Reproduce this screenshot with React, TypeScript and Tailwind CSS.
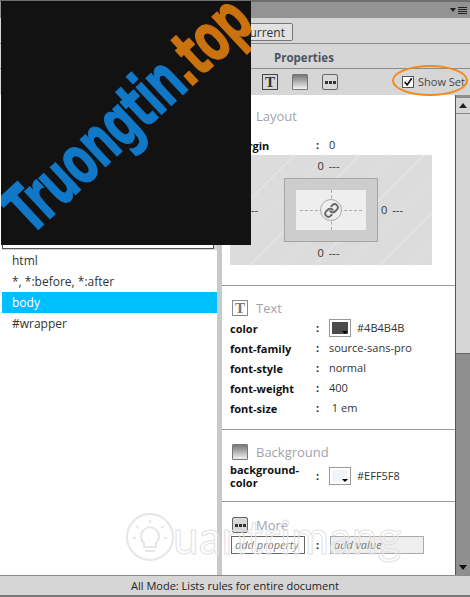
import { Link as LinkIcon } from 'lucide-react';

const textRows = [
  { label: 'font-family', value: 'source-sans-pro' },
  { label: 'font-style', value: 'normal' },
  { label: 'font-weight', value: '400' },
  { label: 'font-size', value: ' 1 em' },
];

function TextIcon({ dim }: { dim?: boolean }) {
  return (
    <div className={`w-[16px] h-[16px] border flex items-center justify-center font-['Liberation_Serif',serif] font-bold text-[15px] leading-none ${dim ? 'border-[#8a8a8a] text-[#777]' : 'border-[#444] text-[#333]'}`}>
      T
    </div>
  );
}

function BackgroundIcon() {
  return <div className="w-[16px] h-[16px] border border-[#777] rounded-[1px] bg-gradient-to-b from-[#777] to-[#f2f2f2]" />;
}

function MoreIcon() {
  return (
    <div className="w-[16px] h-[16px] border border-[#666] rounded-[2px] bg-[#d8d8d8] flex items-center justify-center gap-[1px]">
      <span className="w-[3px] h-[3px] bg-[#333]" />
      <span className="w-[3px] h-[3px] bg-[#333]" />
      <span className="w-[3px] h-[3px] bg-[#333]" />
    </div>
  );
}

function Swatch({ color }: { color: string }) {
  return (
    <div className="relative w-[22px] h-[18px] border border-[#999] bg-white p-[2px]">
      <div className={`w-full h-full ${color}`} />
      <span className="absolute right-[2px] bottom-[2px] border-x-[3px] border-t-[3px] border-x-transparent border-t-black" />
    </div>
  );
}

function Label({ children }: { children: React.ReactNode }) {
  return <div className="w-[86px] font-bold text-[#111] leading-[13px]">{children}</div>;
}

function Colon() {
  return <div className="w-[13px] font-bold text-[#222]">:</div>;
}

export default function App() {
  return (
    <div className="relative w-[470px] h-[597px] overflow-hidden flex flex-col bg-[#d6d6d6] font-['Open_Sans',sans-serif] text-[11px] text-[#333]">
      {/* Barre du haut */}
      <div className="h-[18px] bg-[#939393] border-t-2 border-[#6e6e6e] flex items-center justify-end pr-[3px] gap-[2px]">
        <span className="border-x-[3px] border-t-[4px] border-x-transparent border-t-[#222]" />
        <div className="flex flex-col gap-[1px] w-[9px]">
          <span className="h-[1px] bg-[#222]" />
          <span className="h-[1px] bg-[#222]" />
          <span className="h-[1px] bg-[#222]" />
          <span className="h-[1px] bg-[#222]" />
        </div>
      </div>

      <div className="h-[26px] border-b border-[#8c8c8c] flex items-start pt-[5px] pl-[230px]">
        <div className="w-[63px] h-[18px] border border-[#777] rounded-[2px] bg-[#e2e2e2] text-[12px] leading-[17px] text-right pr-[7px]">Current</div>
      </div>

      <div className="h-[25px] border-b border-[#8c8c8c] flex items-center pt-[3px] pl-[274px] font-bold text-[11.5px] text-[#4b5563]">
        Properties
      </div>

      <div className="h-[26px] flex items-center pl-[262px]">
        <div className="flex gap-[14px]">
          <TextIcon />
          <BackgroundIcon />
          <MoreIcon />
        </div>
        <div className="ml-[64px] flex items-center gap-[4px]">
          <div className="w-[12px] h-[12px] border border-[#555] bg-white flex items-center justify-center">
            <svg viewBox="0 0 12 12" className="w-[12px] h-[12px]">
              <path d="M2 6 L5 9.5 L10.5 1.5" fill="none" stroke="#111" strokeWidth="2" />
            </svg>
          </div>
          <span className="text-[11px] text-[#444]">Show Set</span>
        </div>
      </div>

      <div className="flex-1 flex min-h-0">
        {/* Liste des règles */}
        <div className="w-[217px] flex flex-col pl-[2px] bg-white">
          <div className="h-[155px] bg-[#d6d6d6] flex flex-col justify-end pb-[1px]">
            <div className="h-[18px] mr-[3px] border border-[#555] bg-white" />
          </div>
          <div className="text-[12px] text-[#333]">
            <div className="h-[21px] pl-[10px] pt-[1px] flex items-center">html</div>
            <div className="h-[21px] pl-[10px] pt-[1px] flex items-center">*, *:before, *:after</div>
            <div className="h-[21px] pl-[10px] pt-[1px] flex items-center bg-[#00bfff] text-white">body</div>
            <div className="h-[21px] pl-[10px] pt-[1px] flex items-center">#wrapper</div>
          </div>
        </div>

        <div className="w-[5px] bg-[#c9c9c9]" />

        {/* Panneau des propriétés */}
        <div className="w-[233px] bg-white flex flex-col">
          <section className="h-[191px] border-b border-[#999] pl-[8px]">
            <div className="h-[40px] pl-[26px] pt-[12px] text-[13px] leading-[18px] text-[#a3a3ad]">Layout</div>
            <div className="h-[20px] flex items-center">
              <Label>margin</Label>
              <Colon />
              <span>0</span>
            </div>
            <div className="w-[202px] h-[110px] grid grid-cols-[54px_94px_54px] grid-rows-[23px_64px_23px] bg-[#dcdcdc] bg-[repeating-linear-gradient(135deg,#dcdcdc_0px,#dcdcdc_22px,#e4e4e4_22px,#e4e4e4_23px)]">
              <div />
              <div className="flex items-center justify-center gap-[5px] pr-[5px]"><span>0</span><span>---</span></div>
              <div />
              <div className="flex items-center justify-end pr-[26px]"><span>---</span></div>
              <div className="border border-[#a5a5a5] bg-[#cdcdcd] p-[11px]">
                <div className="relative w-full h-full bg-[#eeeeee] flex items-center justify-center">
                  <div className="absolute inset-x-[4px] top-1/2 border-t border-dashed border-[#aaa]" />
                  <div className="absolute inset-y-0 left-1/2 border-l border-dashed border-[#aaa]" />
                  <div className="relative w-[22px] h-[22px] rounded-full border border-[#aaa] bg-[#eee] flex items-center justify-center">
                    <LinkIcon className="w-[15px] h-[15px] text-[#666]" strokeWidth={3} />
                  </div>
                </div>
              </div>
              <div className="flex items-center pl-[3px] gap-[5px]"><span>0</span><span>---</span></div>
              <div />
              <div className="flex items-center justify-center gap-[5px] pr-[5px]"><span>0</span><span>---</span></div>
              <div />
            </div>
          </section>

          <section className="h-[144px] border-b border-[#999] pl-[8px]">
            <div className="h-[32px] pt-[12px] flex items-center gap-[8px] pl-[2px] text-[13px] leading-[16px] text-[#a3a3ad]">
              <TextIcon dim />
              <span>Text</span>
            </div>
            <div className="h-[20px] flex items-center">
              <Label>color</Label>
              <Colon />
              <Swatch color="bg-[#4b4b4b]" />
              <span className="ml-[6px]">#4B4B4B</span>
            </div>
            {textRows.map((row) => (
              <div key={row.label} className="h-[20px] flex items-center">
                <Label>{row.label}</Label>
                <Colon />
                <span className="whitespace-pre">{row.value}</span>
              </div>
            ))}
          </section>

          <section className="h-[72px] border-b border-[#999] pl-[8px]">
            <div className="h-[32px] pt-[12px] flex items-center gap-[8px] pl-[2px] text-[13px] leading-[16px] text-[#a3a3ad]">
              <BackgroundIcon />
              <span>Background</span>
            </div>
            <div className="h-[28px] flex items-center">
              <Label>background-<br />color</Label>
              <Colon />
              <Swatch color="bg-[#eff5f8]" />
              <span className="ml-[6px]">#EFF5F8</span>
            </div>
          </section>

          <section className="flex-1 pl-[8px] relative">
            <div className="h-[34px] pt-[12px] flex items-center gap-[8px] pl-[2px] text-[13px] leading-[16px] text-[#a3a3ad]">
              <MoreIcon />
              <span>More</span>
            </div>
            <div className="flex items-center">
              <div className="w-[74px] h-[18px] ml-[1px] border border-[#666] bg-white italic text-[#777] pl-[3px] leading-[16px]">add property</div>
              <div className="w-[12px] ml-[11px] font-bold text-[#222]">:</div>
              <div className="w-[94px] h-[18px] ml-[2px] border border-[#aaa] bg-[#efefef] italic text-[#777] pl-[3px] leading-[16px]">add value</div>
            </div>
          </section>
        </div>

        {/* Barre de défilement */}
        <div className="w-[15px] border-l border-[#555] flex flex-col bg-[#8f8f8f]">
          <div className="h-[17px] mt-[2px] bg-[#d6d6d6] border-y border-[#888] flex items-center justify-center">
            <span className="border-x-[4px] border-b-[5px] border-x-transparent border-b-[#222]" />
          </div>
          <div className="h-[240px] bg-[#d6d6d6] border-b border-[#666]" />
          <div className="flex-1" />
          <div className="h-[16px] bg-[#8f8f8f] flex items-center justify-center">
            <span className="border-x-[4px] border-t-[5px] border-x-transparent border-t-[#111]" />
          </div>
        </div>
      </div>

      <div className="h-[22px] border-t border-[#8c8c8c] border-b-2 border-b-[#777] bg-[#d6d6d6] text-center text-[#222] leading-[19px]">
        All Mode: Lists rules for entire document
      </div>

      {/* Filigrane du bas */}
      <div className="absolute left-[125px] top-[512px] flex items-center pointer-events-none">
        <svg viewBox="0 0 50 50" className="w-[50px] h-[50px]" fill="none" stroke="#e6e6e6" strokeWidth="2">
          <circle cx="25" cy="25" r="23" />
          <path d="M19 31 a9 9 0 1 1 12 0 v4 h-12 z M20 39 h10 M25 8 v3 M11 14 l3 2 M39 14 l-3 2 M8 26 h3 M42 26 h-3" />
        </svg>
        <span className="-ml-[2px] text-[46px] leading-none font-['Lato',sans-serif] text-transparent [-webkit-text-stroke:1px_#e2e2e2]">uantrimang</span>
      </div>

      {/* Bloc noir du filigrane */}
      <div className="absolute left-[1px] top-[1px] w-[250px] h-[244px] bg-[#121212] flex items-center justify-center overflow-hidden">
        <div className="mb-[16px] ml-[2px] -rotate-[43deg] scale-x-[0.62] whitespace-nowrap font-['DejaVu_Sans',sans-serif] font-bold text-[68px] tracking-[-2px] leading-none text-[#1178c8] [-webkit-text-stroke:1px_currentColor]">
          Truongtin<span className="text-[#c9720f]">.top</span>
        </div>
      </div>

      {/* Ellipse orange */}
      <div className="absolute left-[392px] top-[65px] w-[76px] h-[31px] rounded-[50%] border-2 border-[#f08a1d]" />
    </div>
  );
}
